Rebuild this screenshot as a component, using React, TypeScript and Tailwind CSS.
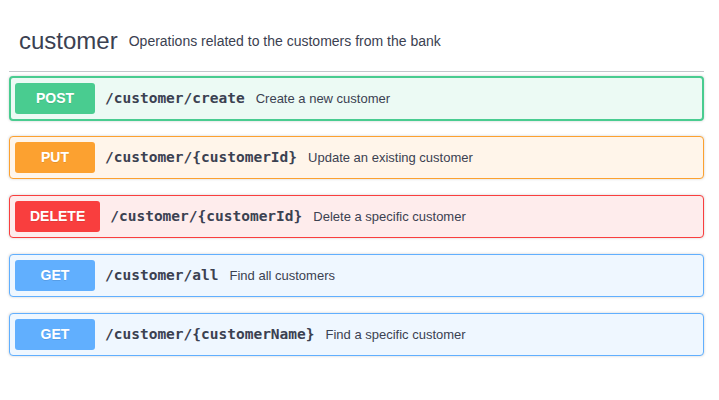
import React from "react";

type Op = {
  method: string;
  path: string;
  desc: string;
  border: string;
  bg: string;
  btn: string;
  wrap: string;
};

const ops: Op[] = [
  {
    method: "POST",
    path: "/customer/create",
    desc: "Create a new customer",
    border: "border-2 border-[#49cc90]",
    bg: "bg-[#ecfaf4]",
    btn: "bg-[#49cc90]",
    wrap: "h-[45px] mb-[15px] pl-[4px] pr-[5px]",
  },
  {
    method: "PUT",
    path: "/customer/{customerId}",
    desc: "Update an existing customer",
    border: "border border-[#fca130]",
    bg: "bg-[#fff5ea]",
    btn: "bg-[#fca130]",
    wrap: "h-[43px] mb-[16px] px-[5px]",
  },
  {
    method: "DELETE",
    path: "/customer/{customerId}",
    desc: "Delete a specific customer",
    border: "border border-[#f93e3e]",
    bg: "bg-[#feecec]",
    btn: "bg-[#f93e3e]",
    wrap: "h-[43px] mb-[16px] px-[5px]",
  },
  {
    method: "GET",
    path: "/customer/all",
    desc: "Find all customers",
    border: "border border-[#61affe]",
    bg: "bg-[#eff7ff]",
    btn: "bg-[#61affe]",
    wrap: "h-[43px] mb-[16px] px-[5px]",
  },
  {
    method: "GET",
    path: "/customer/{customerName}",
    desc: "Find a specific customer",
    border: "border border-[#61affe]",
    bg: "bg-[#eff7ff]",
    btn: "bg-[#61affe]",
    wrap: "h-[43px] mb-[16px] px-[5px]",
  },
];

export default function App() {
  return (
    <div
      className="w-[719px] h-[400px] bg-white pl-[9px] pr-[15px] pt-[11px] text-[#3b4151]"
      style={{ fontFamily: '"Liberation Sans", Arial, sans-serif' }}
    >
      <div className="h-[61px] flex items-center pl-[10px] border-b border-[#c4c6cb]">
        <span className="text-[24px] leading-[28px]">customer</span>
        <span className="text-[14px] pl-[11px]">Operations related to the customers from the bank</span>
      </div>
      <div className="mt-[4px] flex flex-col">
        {ops.map((op, i) => (
          <div
            key={i}
            className={`${op.wrap} ${op.border} ${op.bg} rounded-[4px] shadow-[0_0_3px_rgba(0,0,0,0.19)] flex items-center`}
          >
            <div
              className={`${op.btn} h-[31px] min-w-[80px] px-[15px] rounded-[3px] flex items-center justify-center text-white text-[14px] font-bold [text-shadow:0_1px_0_rgba(0,0,0,0.1)]`}
            >
              {op.method}
            </div>
            <span
              className="pl-[10px] pr-[11px] text-[14.5px] font-bold text-[#3b4151]"
              style={{ fontFamily: '"DejaVu Sans Mono", "Liberation Mono", monospace' }}
            >
              {op.path}
            </span>
            <span className="text-[13px] text-[#3b4151]">{op.desc}</span>
          </div>
        ))}
      </div>
    </div>
  );
}
